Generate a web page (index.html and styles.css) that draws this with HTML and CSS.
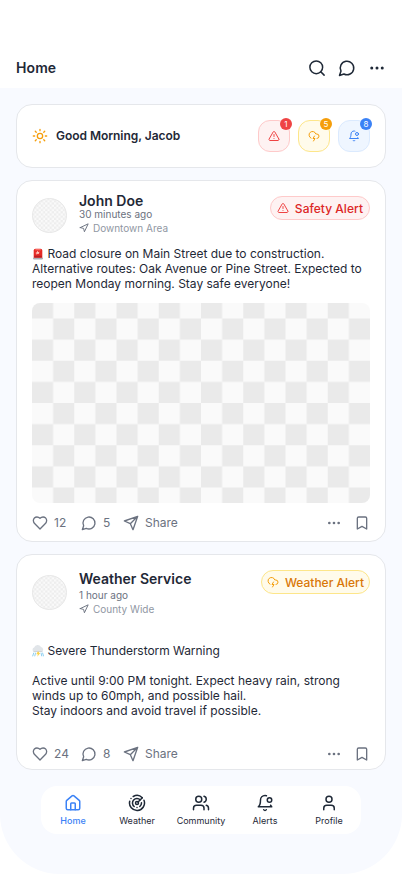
FILE: index.html
```html
<!DOCTYPE html>
<html lang="en">
<head>
<meta charset="utf-8">
<title>Home</title>
<link rel="stylesheet" href="styles.css">
</head>
<body>
<svg class="sprite" aria-hidden="true" width="0" height="0">
  <defs>
    <pattern id="checks" width="42.250" height="42.250" y="15.500" patternUnits="userSpaceOnUse"><rect width="42.250" height="42.250" fill="#fafafa"/><path d="M21.125 0H42.250V21.125H0V42.250H21.125z" fill="#eaeaea"/></pattern>
    <pattern id="checks-small" width="4.400" height="4.400" patternUnits="userSpaceOnUse"><rect width="4.400" height="4.400" fill="#fafafa"/><path d="M2.200 0h2.200v2.200H0v2.200h2.200z" fill="#ededed"/></pattern>
  </defs>
  <symbol id="search" viewBox="0 0 24 24"><circle cx="11" cy="11" r="8.500"/><path d="m21.500 21.500-4.500-4.500"/></symbol>
  <symbol id="message" viewBox="0 0 24 24"><path d="M7.9 20A9 9 0 1 0 4 16.1L2 22Z"/></symbol>
  <symbol id="dots" viewBox="0 0 24 24"><circle cx="5" cy="12" r="1"/><circle cx="12" cy="12" r="1"/><circle cx="19" cy="12" r="1"/></symbol>
  <symbol id="sun" viewBox="0 0 24 24"><circle cx="12" cy="12" r="4"/><path d="M12 2v2M12 20v2m-7.07-17.07 1.41 1.41m11.32 11.32 1.41 1.41M2 12h2m16 0h2M6.34 17.66l-1.41 1.41M19.07 4.93l-1.41 1.41"/></symbol>
  <symbol id="warning" viewBox="0 0 24 24"><path d="m21.73 18-8-14a2 2 0 0 0-3.48 0l-8 14A2 2 0 0 0 4 21h16a2 2 0 0 0 1.73-3M12 9v4M12 17h.01"/></symbol>
  <symbol id="storm" viewBox="0 0 24 24"><path d="M6 16.326A7 7 0 1 1 15.71 8h1.79a4.5 4.5 0 0 1 .5 8.973"/><path d="m13 12-3 5h4l-3 5"/></symbol>
  <symbol id="bell" viewBox="0 0 24 24"><path d="M19.4 14.9C20.2 16.4 21 17 21 17H3s3-2 3-9c0-3.3 2.7-6 6-6 .7 0 1.3.1 1.9.3M10.3 21a1.94 1.94 0 0 0 3.4 0"/><circle cx="18" cy="8" r="3"/></symbol>
  <symbol id="place" viewBox="0 0 24 24"><path d="m3 11 19-9-9 19-2-8-8-2z"/></symbol>
  <symbol id="heart" viewBox="0 0 24 24"><path d="M19 14c1.49-1.46 3-3.21 3-5.5A5.5 5.5 0 0 0 16.5 3c-1.76 0-3 .5-4.5 2-1.5-1.5-2.74-2-4.5-2A5.5 5.5 0 0 0 2 8.500c0 2.300 1.500 4.050 3 5.500l7 7Z"/></symbol>
  <symbol id="send" viewBox="0 0 24 24"><path d="m22 2-7 20-4-9-9-4ZM22 2 11 13"/></symbol>
  <symbol id="bookmark" viewBox="0 0 24 24"><path d="m19 21-7-4-7 4V5a2 2 0 0 1 2-2h10a2 2 0 0 1 2 2v16z"/></symbol>
  <symbol id="house" viewBox="0 0 24 24"><path d="M15 21v-8a1 1 0 0 0-1-1h-4a1 1 0 0 0-1 1v8"/><path d="M3 10a2 2 0 0 1 .709-1.528l7-5.999a2 2 0 0 1 2.582 0l7 5.999A2 2 0 0 1 21 10v9a2 2 0 0 1-2 2H5a2 2 0 0 1-2-2z"/></symbol>
  <symbol id="radar" viewBox="0 0 24 24"><path d="M19.07 4.93A10 10 0 0 0 6.99 3.34M4 6h.01M2.29 9.62A10 10 0 1 0 21.31 8.35M16.24 7.76A6 6 0 1 0 8.23 16.67M12 18h.01M17.99 11.66A6 6 0 0 1 15.77 16.67"/><circle cx="12" cy="12" r="2"/><path d="m13.41 10.59 5.66-5.66"/></symbol>
  <symbol id="users" viewBox="0 0 24 24"><path d="M16 21v-2a4 4 0 0 0-4-4H6a4 4 0 0 0-4 4v2M22 21v-2a4 4 0 0 0-3-3.87M16 3.13a4 4 0 0 1 0 7.75"/><circle cx="9" cy="7" r="4"/></symbol>
  <symbol id="user" viewBox="0 0 24 24"><path d="M19 21v-2a4 4 0 0 0-4-4H9a4 4 0 0 0-4 4v2"/><circle cx="12" cy="7" r="4"/></symbol>
</svg>
<div class="screen">
  <header class="topbar">
    <h1>Home</h1>
    <div class="topbar-actions">
      <svg class="icon i18"><use href="#search"/></svg>
      <svg class="icon i18"><use href="#message"/></svg>
      <svg class="icon i18"><use href="#dots"/></svg>
    </div>
  </header>
  <main class="feed">
    <section class="card greeting">
      <svg class="icon i16 sun"><use href="#sun"/></svg>
      <h2>Good Morning, Jacob</h2>
      <div class="chips">
        <div class="chip red"><svg class="icon i12"><use href="#warning"/></svg><span class="badge">1</span></div>
        <div class="chip amber"><svg class="icon i12"><use href="#storm"/></svg><span class="badge">5</span></div>
        <div class="chip blue"><svg class="icon i12"><use href="#bell"/></svg><span class="badge">8</span></div>
      </div>
    </section>

    <article class="card post safety">
      <div class="post-head">
        <svg class="avatar" viewBox="0 0 35 35"><circle cx="17.500" cy="17.500" r="17" fill="url(#checks-small)" stroke="#e7e7e7"/></svg>
        <div class="author">
          <h3>John Doe</h3>
          <p class="time">30 minutes ago</p>
          <p class="place"><svg class="icon i10"><use href="#place"/></svg>Downtown Area</p>
        </div>
        <div class="pill red"><svg class="icon i12"><use href="#warning"/></svg>Safety Alert</div>
      </div>
      <div class="post-body">
        <p><svg class="emoji" viewBox="0 0 12 12"><rect x="1" y="9.400" width="10" height="2" rx=".8" fill="#a8adb5"/><path d="M1.700 9.800V2.500Q1.700.7 3.500.7h5q1.800 0 1.800 1.800v7.300z" fill="#e52a27"/><path d="M2.300 7.700h7.400v1.800H2.300z" fill="#b91f24"/><path d="M3 2.200q.2-.9 1.200-.9h3.600q1 0 1.200.9z" fill="#ff8177"/><path d="m5.500 2.800.7 1.200 1.600-.2-1 1.200.4 1-1.500-.3-1.100 1-.2-1.200-1.200-.5 1.300-.5z" fill="#ffc5ba"/></svg>Road closure on Main Street due to construction.</p>
        <p>Alternative routes: Oak Avenue or Pine Street. Expected to reopen Monday morning. Stay safe everyone!</p>
      </div>
      <svg class="photo" viewBox="0 0 338 200"><rect width="338" height="200" rx="8" fill="url(#checks)"/></svg>
      <div class="post-foot">
        <span class="stat"><svg class="icon i16"><use href="#heart"/></svg>12</span>
        <span class="stat"><svg class="icon i16"><use href="#message"/></svg>5</span>
        <span class="stat"><svg class="icon i16"><use href="#send"/></svg>Share</span>
        <svg class="icon i16"><use href="#dots"/></svg>
        <svg class="icon i16"><use href="#bookmark"/></svg>
      </div>
    </article>

    <article class="card post weather">
      <div class="post-head">
        <svg class="avatar" viewBox="0 0 35 35"><circle cx="17.500" cy="17.500" r="17" fill="url(#checks-small)" stroke="#e7e7e7"/></svg>
        <div class="author">
          <h3>Weather Service</h3>
          <p class="time">1 hour ago</p>
          <p class="place"><svg class="icon i10"><use href="#place"/></svg>County Wide</p>
        </div>
        <div class="pill amber"><svg class="icon i12"><use href="#storm"/></svg>Weather Alert</div>
      </div>
      <div class="post-body">
        <p><svg class="emoji" viewBox="0 0 12 12"><path d="M2.200 6.900a2.300 2.300 0 0 1-.1-4.400A3.800 3.800 0 0 1 9 2a2.600 2.600 0 0 1 .7 4.900z" fill="#e1e5e9"/><path d="M1.500 6.500h9" stroke="#cbd0d6" stroke-width=".8"/><path d="m5.700 6.700-1.500 2.600h1.700l-.6 2.400 3-3.700H6.800l.8-1.300z" fill="#fcd34d"/><path d="M1.800 7.700.6 11.300M3.600 7.700l-.9 3.600M9 7.700l.8 3.600M10.500 7.700l1.100 3.600" stroke="#6fc3ee" stroke-width=".8"/></svg>Severe Thunderstorm Warning</p>
        <p class="gap">Active until 9:00 PM tonight. Expect heavy rain, strong winds up to 60mph, and possible hail.</p>
        <p>Stay indoors and avoid travel if possible.</p>
      </div>
      <div class="post-foot">
        <span class="stat"><svg class="icon i16"><use href="#heart"/></svg>24</span>
        <span class="stat"><svg class="icon i16"><use href="#message"/></svg>8</span>
        <span class="stat"><svg class="icon i16"><use href="#send"/></svg>Share</span>
        <svg class="icon i16"><use href="#dots"/></svg>
        <svg class="icon i16"><use href="#bookmark"/></svg>
      </div>
    </article>
  </main>
  <nav class="tabs">
    <a class="tab active"><svg class="icon i18"><use href="#house"/></svg>Home</a>
    <a class="tab"><svg class="icon i18"><use href="#radar"/></svg>Weather</a>
    <a class="tab"><svg class="icon i18"><use href="#users"/></svg>Community</a>
    <a class="tab"><svg class="icon i18"><use href="#bell"/></svg>Alerts</a>
    <a class="tab"><svg class="icon i18"><use href="#user"/></svg>Profile</a>
  </nav>
</div>
</body>
</html>
```
FILE: styles.css
```css
* { box-sizing: border-box; margin: 0; }
body { background: #fff; font-family: Inter, "Liberation Sans", sans-serif; color: #1f2937; }
.sprite { position: absolute; }
.screen { width: 402px; height: 874px; overflow: hidden; background: #f8faff; border-radius: 0 0 60px 60px; }
.icon { display: block; flex: none; fill: none; stroke: currentColor; stroke-width: 2; stroke-linecap: round; stroke-linejoin: round; }
.i10 { width: 10px; height: 10px; }
.i12 { width: 12px; height: 12px; }
.i16 { width: 16px; height: 16px; }
.i18 { width: 18px; height: 18px; }

.topbar { height: 88px; padding: 48px 16px 0; background: #fff; display: flex; align-items: center; justify-content: space-between; }
.topbar h1 { font-size: 14px; line-height: 20px; font-weight: 600; letter-spacing: .1px; }
.topbar-actions { display: flex; gap: 12px; }

.feed { padding: 16px 16px 0; display: flex; flex-direction: column; gap: 12px; }
.card { background: #fff; border: 1px solid #e5e7eb; border-radius: 16px; padding: 15px; }
.greeting { height: 64px; display: flex; align-items: center; gap: 8px; }
.greeting h2 { font-size: 12px; font-weight: 600; line-height: 16px; letter-spacing: -.04px; }
.sun { color: #f59e0b; }
.chips { display: flex; gap: 8px; margin-left: auto; }
.chip { position: relative; width: 32px; height: 32px; border: 1px solid; border-radius: 12px; display: flex; align-items: center; justify-content: center; }
.badge { position: absolute; top: -3px; right: -3px; width: 12px; height: 12px; border-radius: 50%; color: #fff; font-size: 8px; line-height: 12px; text-align: center; }

.post { display: flex; flex-direction: column; }
.safety { height: 362px; }
.weather { height: 216px; }
.post-head { display: flex; align-items: flex-start; }
.avatar { display: block; width: 35px; height: 35px; margin-top: 1.500px; }
.weather .avatar { margin-top: 5px; }
.author { margin-left: 12px; }
.author h3 { font-size: 14px; line-height: 10px; font-weight: 600; }
.safety h3 { padding-bottom: 1px; }
.weather h3 { padding: 4px 0; }
.time { font-size: 10px; line-height: 14px; color: #6b7280; }
.place { display: flex; align-items: center; gap: 4px; font-size: 10px; line-height: 14px; color: #9097a3; }
.place .icon { color: #6b7280; stroke-width: 2.300; }
.pill { margin-left: auto; height: 24px; padding: 0 5px; border: 1px solid; border-radius: 12px; display: flex; align-items: center; gap: 6px; font-size: 12px; font-weight: 500; white-space: nowrap; }
.safety .pill { padding: 0 6px; letter-spacing: .03px; }
.red { background: #fef2f2; border-color: #fecaca; }
.amber { background: #fffbeb; border-color: #fde68a; }
.blue { background: #eff6ff; border-color: #dbeafe; }
.red .icon { color: #ef4444; }
.amber .icon { color: #f59e0b; }
.blue .icon { color: #3b82f6; }
.red .badge { background: #ef4444; }
.amber .badge { background: #f59e0b; }
.blue .badge { background: #3b82f6; }
.pill.red { color: #dc2626; }
.pill.amber { color: #d97706; }

.post-body { font-size: 12px; line-height: 15px; }
.safety .post-body { margin-top: 11px; }
.weather .post-body { margin-top: 27px; }
.weather .post-body p:first-child { letter-spacing: -.05px; }
.gap { margin-top: 15px; }
.emoji { width: 12px; height: 12px; margin-right: 3.500px; vertical-align: -2px; fill: none; }
.photo { display: block; flex: none; width: 338px; height: 200px; margin-top: 12px; }
.post-foot { margin-top: auto; margin-bottom: -5px; height: 16px; display: grid; grid-template-columns: 49px 42px 1fr 28px 16px; align-items: center; color: #6b7280; }
.weather .post-foot { margin-bottom: -8px; }
.stat { display: flex; align-items: center; gap: 6px; font-size: 12px; line-height: 16px; }

.tabs { width: 320px; height: 48px; margin: 16px auto 0; background: #fff; border-radius: 16px; display: flex; }
.tab { flex: 1; display: flex; flex-direction: column; align-items: center; padding-top: 8px; gap: 3px; font-size: 9px; line-height: 12px; }
.active { color: #3b82f6; font-weight: 500; }
```
